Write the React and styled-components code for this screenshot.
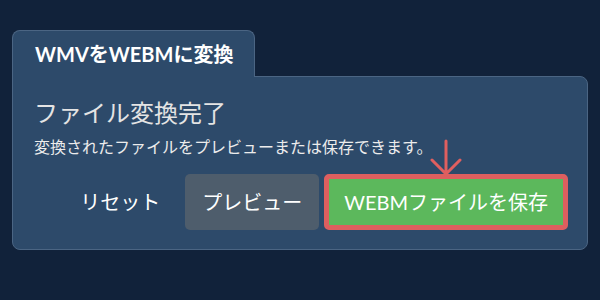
import React from 'react'
import styled, { createGlobalStyle } from 'styled-components'

const GlobalStyle = createGlobalStyle`
  body {
    margin: 0;
    background: #11223a;
    font-family: Lato, "Noto Sans CJK JP", sans-serif;
  }
`

const Page = styled.div`
  width: 600px;
  height: 300px;
  box-sizing: border-box;
  padding: 30px 12px;
  background: #11223a;
`

const Tab = styled.div`
  position: relative;
  z-index: 1;
  display: inline-flex;
  align-items: center;
  box-sizing: border-box;
  height: 47px;
  margin-bottom: -1px;
  padding: 0 21px 2px 22px;
  background: #2d4a6a;
  border: 1px solid #4b6583;
  border-bottom: none;
  border-radius: 8px 8px 0 0;
  color: #ffffff;
  font-size: 20px;
  font-weight: 700;
`

const Panel = styled.div`
  box-sizing: border-box;
  width: 576px;
  padding: 22px 19px 19px 21px;
  background: #2d4a6a;
  border: 1px solid #4b6583;
  border-radius: 0 8px 8px 8px;
  color: #e8e8e8;
`

const Heading = styled.h2`
  margin: 0 0 9px;
  font-size: 24px;
  font-weight: 400;
  line-height: 1.2;
  color: #e4e4e4;
`

const Note = styled.p`
  margin: 0 0 18px;
  font-size: 16px;
  line-height: 1.2;
  color: #ececec;
`

const Actions = styled.div`
  display: flex;
  justify-content: flex-end;
  align-items: stretch;
  gap: 5px;
`

const Button = styled.button`
  position: relative;
  box-sizing: border-box;
  height: 56px;
  padding: 0 ${p => p.$pad}px;
  border: ${p => (p.$highlight ? '5px solid #dd5f5f' : 'none')};
  border-radius: 5px;
  background: ${p => p.$bg};
  color: #ffffff;
  font-family: Lato, "Noto Sans CJK JP", sans-serif;
  font-size: 20px;
  cursor: pointer;
`

const Arrow = styled.svg`
  position: absolute;
  left: 50%;
  bottom: calc(100% + 2px);
  transform: translateX(-50%);
`

export default function App() {
  return (
    <>
      <GlobalStyle />
      <Page>
        <Tab>WMVをWEBMに変換</Tab>
        <Panel>
          <Heading>ファイル変換完了</Heading>
          <Note>変換されたファイルをプレビューまたは保存できます。</Note>
          <Actions>
            <Button $bg="transparent" $pad={20}>リセット</Button>
            <Button $bg="#4e5d6c" $pad={17}>プレビュー</Button>
            <Button $bg="#5cb85c" $pad={15} $highlight>
              WEBMファイルを保存
              <Arrow width="32" height="38" viewBox="0 0 32 38">
                <path
                  d="M16 2 V35 M2 21 L16 35 L30 21"
                  fill="none"
                  stroke="#e05f5f"
                  strokeWidth="3"
                  strokeLinecap="round"
                  strokeLinejoin="round"
                />
              </Arrow>
            </Button>
          </Actions>
        </Panel>
      </Page>
    </>
  )
}
